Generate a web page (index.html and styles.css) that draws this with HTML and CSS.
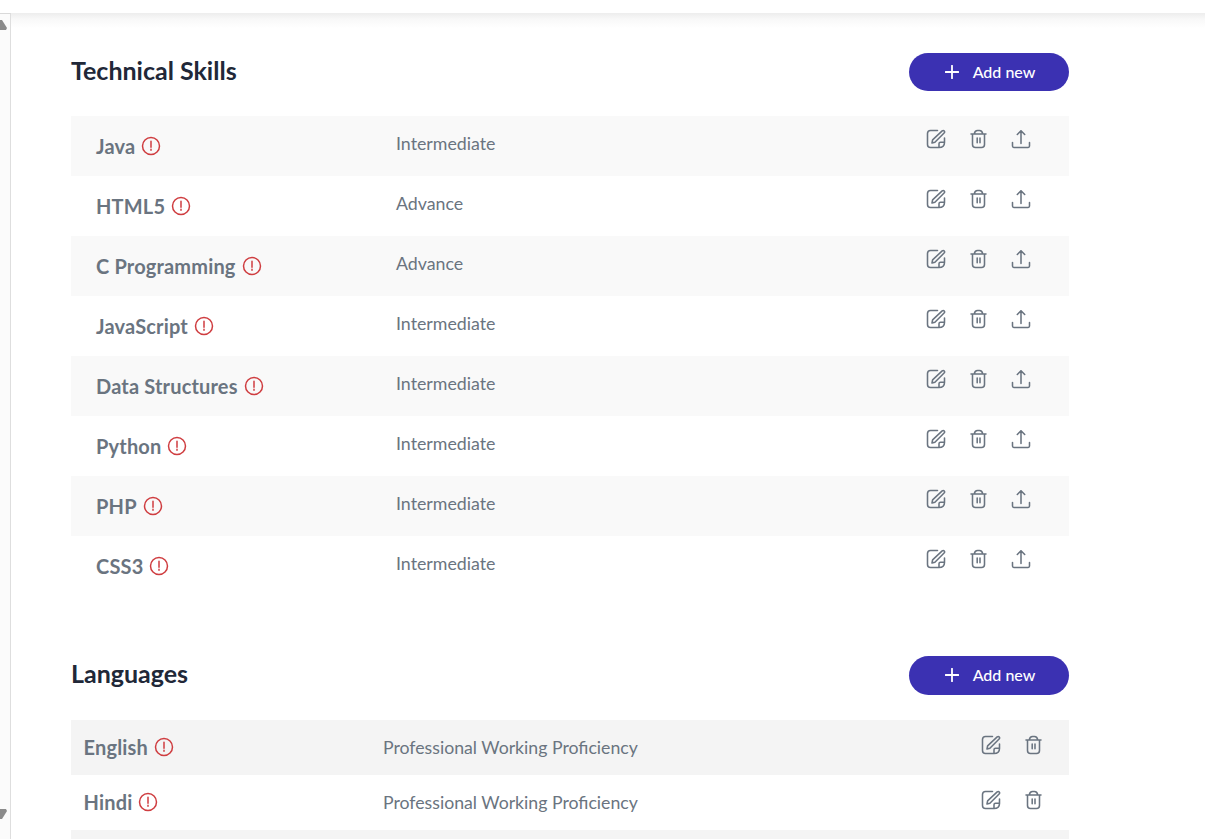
FILE: index.html
```html
<!DOCTYPE html>
<html lang="en">
<head>
<meta charset="utf-8">
<title>Skills and languages</title>
<link rel="stylesheet" href="styles.css">
</head>
<body>
<svg class="sprite" aria-hidden="true">
  <symbol id="alert" viewBox="0 0 20 20"><circle cx="10" cy="10" r="8.5"/><path d="M10 5.3v6M10 13.2v1.1"/></symbol>
  <symbol id="edit" viewBox="0 0 20 20"><path d="M11.500 1.500H4.500Q1.500 1.500 1.500 4.500v11q0 3 3 3h8.500q5.500 0 5.500-5V9"/><path d="M13 18.200v-3.500q0-1.500 1.500-1.500h3.700"/><path d="M6 14l.6-3.100 9.600-9q1.200-1 2 0 .9 1.100-.1 2.100L8.900 13.300z"/></symbol>
  <symbol id="trash" viewBox="0 0 20 20"><path d="M2 5H17M3.500 5V15.500Q3.500 18.500 6.500 18.500H12.500Q15.500 18.500 15.500 15.500V5M5.300 4.800Q5.800 1.500 8.500 1.500H10.500Q13.200 1.500 13.700 4.800M8.200 9V13.800M11 9V13.800"/></symbol>
  <symbol id="upload" viewBox="0 0 20 20"><path d="M10 14.500V1.800M6.300 5.500L10 1.700l3.700 3.800M1.500 13.500v3.600q0 1.300 1.300 1.300h14.400q1.300 0 1.300-1.300v-3.600"/></symbol>
  <symbol id="plus" viewBox="0 0 14 14"><path d="M7 .7v12.600M.7 7h12.600"/></symbol>
</svg>
<header class="topbar"></header>
<div class="shell">
  <aside class="rail"><span class="arrow arrow-up"></span><span class="arrow arrow-down"></span></aside>
  <main class="content">
    <section class="skills">
      <div class="heading"><h2>Technical Skills</h2><button class="add"><svg><use href="#plus"/></svg>Add new</button></div>
      <ul class="list" id="skills"></ul>
    </section>
    <section class="languages">
      <div class="heading"><h2>Languages</h2><button class="add"><svg><use href="#plus"/></svg>Add new</button></div>
      <ul class="list" id="languages"></ul>
    </section>
  </main>
</div>
<script src="app.js"></script>
</body>
</html>
```
FILE: styles.css
```css
* { box-sizing: border-box; }
body { margin: 0; height: 839px; overflow: hidden; background: #fff; font-family: Lato, sans-serif; color: #6a7480; }
.sprite { position: absolute; width: 0; height: 0; }
svg { fill: none; stroke: currentColor; stroke-width: 1.55; stroke-linecap: round; stroke-linejoin: round; }
.topbar { height: 13px; background: #fff; }
.shell { display: flex; height: 826px; }
.rail { width: 11px; background: #fbfbfb; border-top: 1px solid #d9d9d9; border-right: 1px solid #dedede; display: flex; flex-direction: column; justify-content: space-between; padding: 6px 0 20px; overflow: hidden; }
.arrow { width: 14px; height: 10px; margin-left: -7px; background: #8b8b8b; }
.arrow-up { clip-path: polygon(5px 0, 9px 0, 14px 8px, 13px 10px, 0 10px); }
.arrow-down { clip-path: polygon(0 0, 13px 0, 14px 2px, 9px 10px, 5px 10px); }
.content { flex: 1; padding: 40px 136px 0 60px; background: linear-gradient(#ededed, #f8f8f8 6px, #fff 15px); }
.heading { display: flex; justify-content: space-between; height: 63px; }
h2 { margin: 0; font-size: 25px; line-height: 34px; font-weight: 700; color: #212838; }
.add { display: flex; align-items: center; justify-content: center; gap: 14px; width: 160px; height: 38px; border: 0; border-radius: 20px; background: #3b31b2; color: #fff; font: 500 16px/38px Lato, sans-serif; padding: 0 0 0 2px; }
.add svg { width: 14px; height: 14px; stroke-width: 1.8; }
.list { margin: 0; padding: 0; list-style: none; }
.row { display: grid; grid-template-columns: 300px 1fr auto; height: 60px; padding: 0 38px 0 25px; }
.row:nth-child(odd) { background: #f9f9f9; }
.name { display: flex; align-items: center; gap: 6px; height: 60px; font-size: 20px; font-weight: 700; letter-spacing: .17px; }
.name svg { width: 20px; height: 20px; color: #cf3d40; stroke-width: 1.5; }
.level { font-size: 17.8px; line-height: 54px; }
.actions { display: flex; gap: 22.5px; padding-top: 13px; }
.actions svg { width: 20px; height: 20px; }
.languages { padding-top: 60px; }
.languages .heading { height: 64px; }
.languages .add { height: 39px; padding-bottom: 1px; }
.languages .row { height: 55px; grid-template-columns: 299.5px 1fr auto; padding: 0 25.5px 0 12.5px; }
.languages .row:nth-child(odd) { background: #f4f4f4; }
.languages .row:last-child { height: 9px; overflow: hidden; }
.languages .name { height: 54px; }
.languages .level { font-size: 17.7px; line-height: 56px; }
.languages .actions { padding-top: 15px; }
```
FILE: app.js
```js
const icon = (name) => `<svg><use href="#${name}"/></svg>`;
const render = (id, rows, actions) => {
  document.getElementById(id).innerHTML = rows.map(([name, level]) =>
    name
      ? `<li class="row"><div class="name"><span>${name}</span>${icon('alert')}</div><div class="level">${level}</div><div class="actions">${actions.map(icon).join('')}</div></li>`
      : '<li class="row"></li>'
  ).join('');
};
render('skills', [
  ['Java', 'Intermediate'], ['HTML5', 'Advance'], ['C Programming', 'Advance'],
  ['JavaScript', 'Intermediate'], ['Data Structures', 'Intermediate'],
  ['Python', 'Intermediate'], ['PHP', 'Intermediate'], ['CSS3', 'Intermediate']
], ['edit', 'trash', 'upload']);
render('languages', [
  ['English', 'Professional Working Proficiency'],
  ['Hindi', 'Professional Working Proficiency'], []
], ['edit', 'trash']);
```
